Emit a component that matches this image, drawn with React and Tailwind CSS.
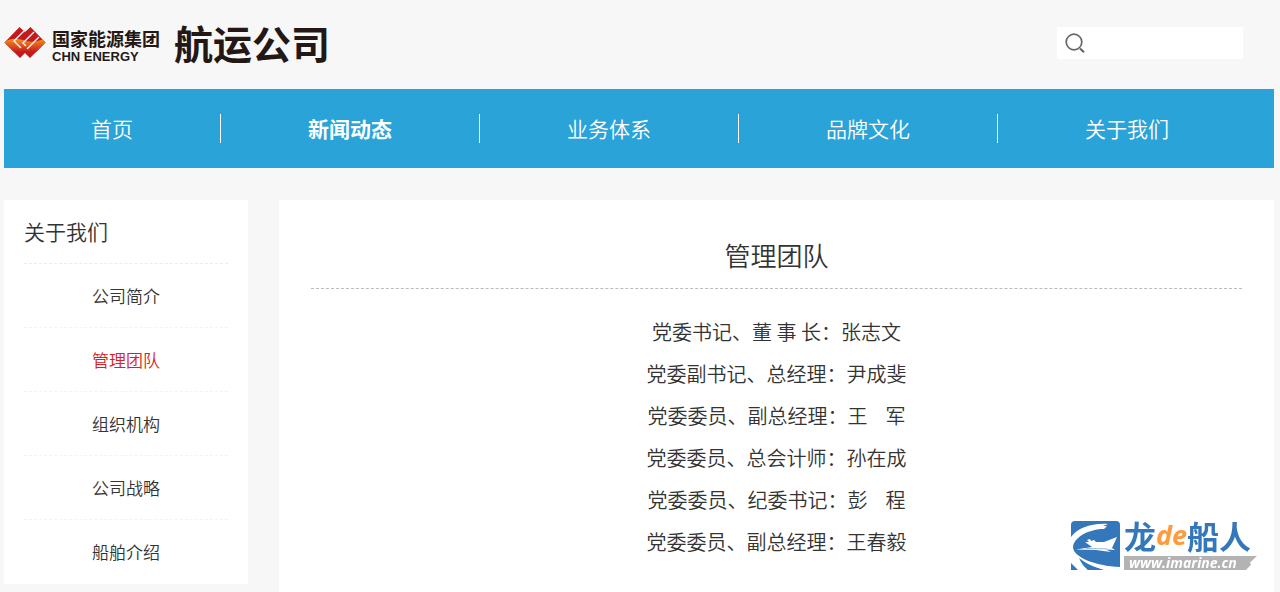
import React from 'react';

const navItems = [
    { label: '首页' },
    { label: '新闻动态', active: true },
    { label: '业务体系' },
    { label: '品牌文化' },
    { label: '关于我们' },
];

const sideItems = [
    { label: '公司简介' },
    { label: '管理团队', active: true },
    { label: '组织机构' },
    { label: '公司战略' },
    { label: '船舶介绍' },
];

const team = [
    '党委书记、董 事 长：张志文',
    '党委副书记、总经理：尹成斐',
    '党委委员、副总经理：王\u00a0\u00a0\u00a0 军',
    '党委委员、总会计师：孙在成',
    '党委委员、纪委书记：彭\u00a0\u00a0\u00a0 程',
    '党委委员、副总经理：王春毅',
];

const EnergyMark = () => (
    <svg width="42" height="31" viewBox="0 0 42 31" aria-hidden="true">
        <defs>
            <linearGradient id="glow" x1="0" y1="0" x2="0" y2="1">
                <stop offset="0" stopColor="#f3a01c" />
                <stop offset="0.5" stopColor="#e2571c" />
                <stop offset="1" stopColor="#c41a1e" />
            </linearGradient>
            <clipPath id="diamonds">
                <path d="M15.500 0 L21 5 L26.500 0 L41.500 15.500 L26 31 L21 26 L16 31 L0.500 15.500 Z" />
            </clipPath>
        </defs>
        <g clipPath="url(#diamonds)">
            <path d="M0 0 H42 V31 H0 Z" fill="#c41a1e" />
            <path d="M0 15 C9 10 15 12 22 14 C29 16 35 14 42 11 V25 H0 Z" fill="url(#glow)" />
            <path d="M22 2 L10 14 L17 21 M30 5 L19 16 L22 19 M35 10 L23 22" fill="none" stroke="#f7f7f7" strokeWidth="1.400" />
        </g>
    </svg>
);

const Header = () => (
    <header className="flex items-center justify-between pt-5 pr-[31px] pb-6 text-[#231815]">
        <a href="#" className="flex items-center">
            <EnergyMark />
            <span className="ml-[6px] flex flex-col pt-[6px]">
                <span className="text-[18px] leading-[21px] font-bold">国家能源集团</span>
                <span className="font-['Liberation_Sans'] text-[13px] leading-[15px] font-bold">CHN ENERGY</span>
            </span>
            <span className="ml-[14px] text-[39px] leading-[45px] font-bold">航运公司</span>
        </a>
        <form className="flex h-8 w-[186px] items-center bg-white pl-2" onSubmit={(e) => e.preventDefault()}>
            <button type="submit" aria-label="搜索" className="shrink-0">
                <svg width="21" height="21" viewBox="0 0 21 21" fill="none" stroke="#666" strokeWidth="1.700">
                    <circle cx="9" cy="10" r="7.800" />
                    <path d="M15 16.500 L19 20.200" strokeWidth="2.200" />
                </svg>
            </button>
            <input type="text" aria-label="搜索" className="h-full w-full min-w-0 px-2 text-sm outline-none" />
        </form>
    </header>
);

const NavBar = () => (
    <nav className="flex items-center bg-[#2aa3d8] py-[25px] text-white">
        {navItems.map((item) => (
            <a
                key={item.label}
                href="#"
                className={`border-r border-white px-[87px] text-[21px] leading-[29px] last:border-r-0 last:pr-0 ${item.active ? 'font-bold' : 'font-[350]'}`}
            >
                {item.label}
            </a>
        ))}
    </nav>
);

const SideMenu = () => (
    <aside className="shrink-0 basis-[244px] self-start bg-white px-5 pb-px">
        <h2 className="border-b border-dashed border-[#ececec] text-[21px] leading-[63px]">关于我们</h2>
        <ul>
            {sideItems.map((item) => (
                <li key={item.label} className="border-b border-dashed border-[#f3f3f3] text-center text-[17px] leading-[63px] last:border-b-0">
                    <a href="#" className={item.active ? 'text-[#e02020]' : ''}>{item.label}</a>
                </li>
            ))}
        </ul>
    </aside>
);

const ShipMark = () => (
    <svg width="49" height="49" viewBox="0 0 49 49" aria-hidden="true">
        <defs>
            <clipPath id="tile">
                <path d="M4 0 H45 Q49 0 49 4 V49 H0 V4 Q0 0 4 0 Z" />
            </clipPath>
        </defs>
        <g clipPath="url(#tile)">
            <path d="M0 0 H49 V49 H0 Z" fill="#3478bb" />
            <path d="M0 16 C7 7 20 2 37 3 L32 5 L36 5 L33 8 C18 8 3 16 2 26 C2 36 24 45 49 46 V49 H32 C20 45 13 42 9 38 L17 49 H7 L0 42 Z" fill="#fff" />
            <path d="M8 37 C14 42 22 46 33 49 H17 C13 46 10 42 8 37 Z" fill="#3478bb" />
            <path d="M16 19 L19 18 L20 20 L23 19 L25 21 L33 21 L46 16 L41 27 L44 29 L35 28.500 L40 31 L25 29 L5 28.500 L21 26 L14 21 L18 21 Z" fill="#fff" />
            <path d="M15 27.500 L36 27.800" stroke="#3478bb" strokeWidth="0.500" />
        </g>
    </svg>
);

const SiteBadge = () => (
    <a href="#" className="fixed right-[23px] bottom-[22px] flex items-end gap-1">
        <ShipMark />
        <span className="flex min-w-[133px] flex-col">
            <span className="flex items-center pb-1 text-[32px] leading-[32px] font-bold text-[#3478bb]">
                龙
                <span className="font-['Open_Sans'] text-[27px] text-[#ff9b3d] italic">de</span>
                船人
            </span>
            <span className="relative pl-[5px] font-['Open_Sans'] text-[14px] leading-[15px] font-bold text-white italic">
                <svg className="absolute inset-0 h-full w-full" viewBox="0 0 133 14" preserveAspectRatio="none" aria-hidden="true">
                    <path d="M0 1 H133 L126 7 L127 9 L122 14 H0 Z" fill="#b3b3b3" />
                </svg>
                <span className="relative">www.imarine.cn</span>
            </span>
        </span>
    </a>
);

const App = () => {
    return (
        <div className="flex min-h-screen flex-col bg-[#f7f7f7] pr-[6px] pl-1 font-['Noto_Sans_CJK_SC',sans-serif] text-[#333]">
            <Header />
            <NavBar />
            <div className="mt-8 flex grow gap-[31px] font-[350]">
                <SideMenu />
                <main className="grow bg-white px-8 pt-9">
                    <h1 className="border-b border-dashed border-[#bbb] pb-[14px] text-center text-[26px] leading-[38px]">管理团队</h1>
                    <div className="mt-[22px] text-center text-[20px] leading-[42px]">
                        {team.map((line) => (
                            <p key={line}>{line}</p>
                        ))}
                    </div>
                </main>
            </div>
            <SiteBadge />
        </div>
    );
};

export default App;
